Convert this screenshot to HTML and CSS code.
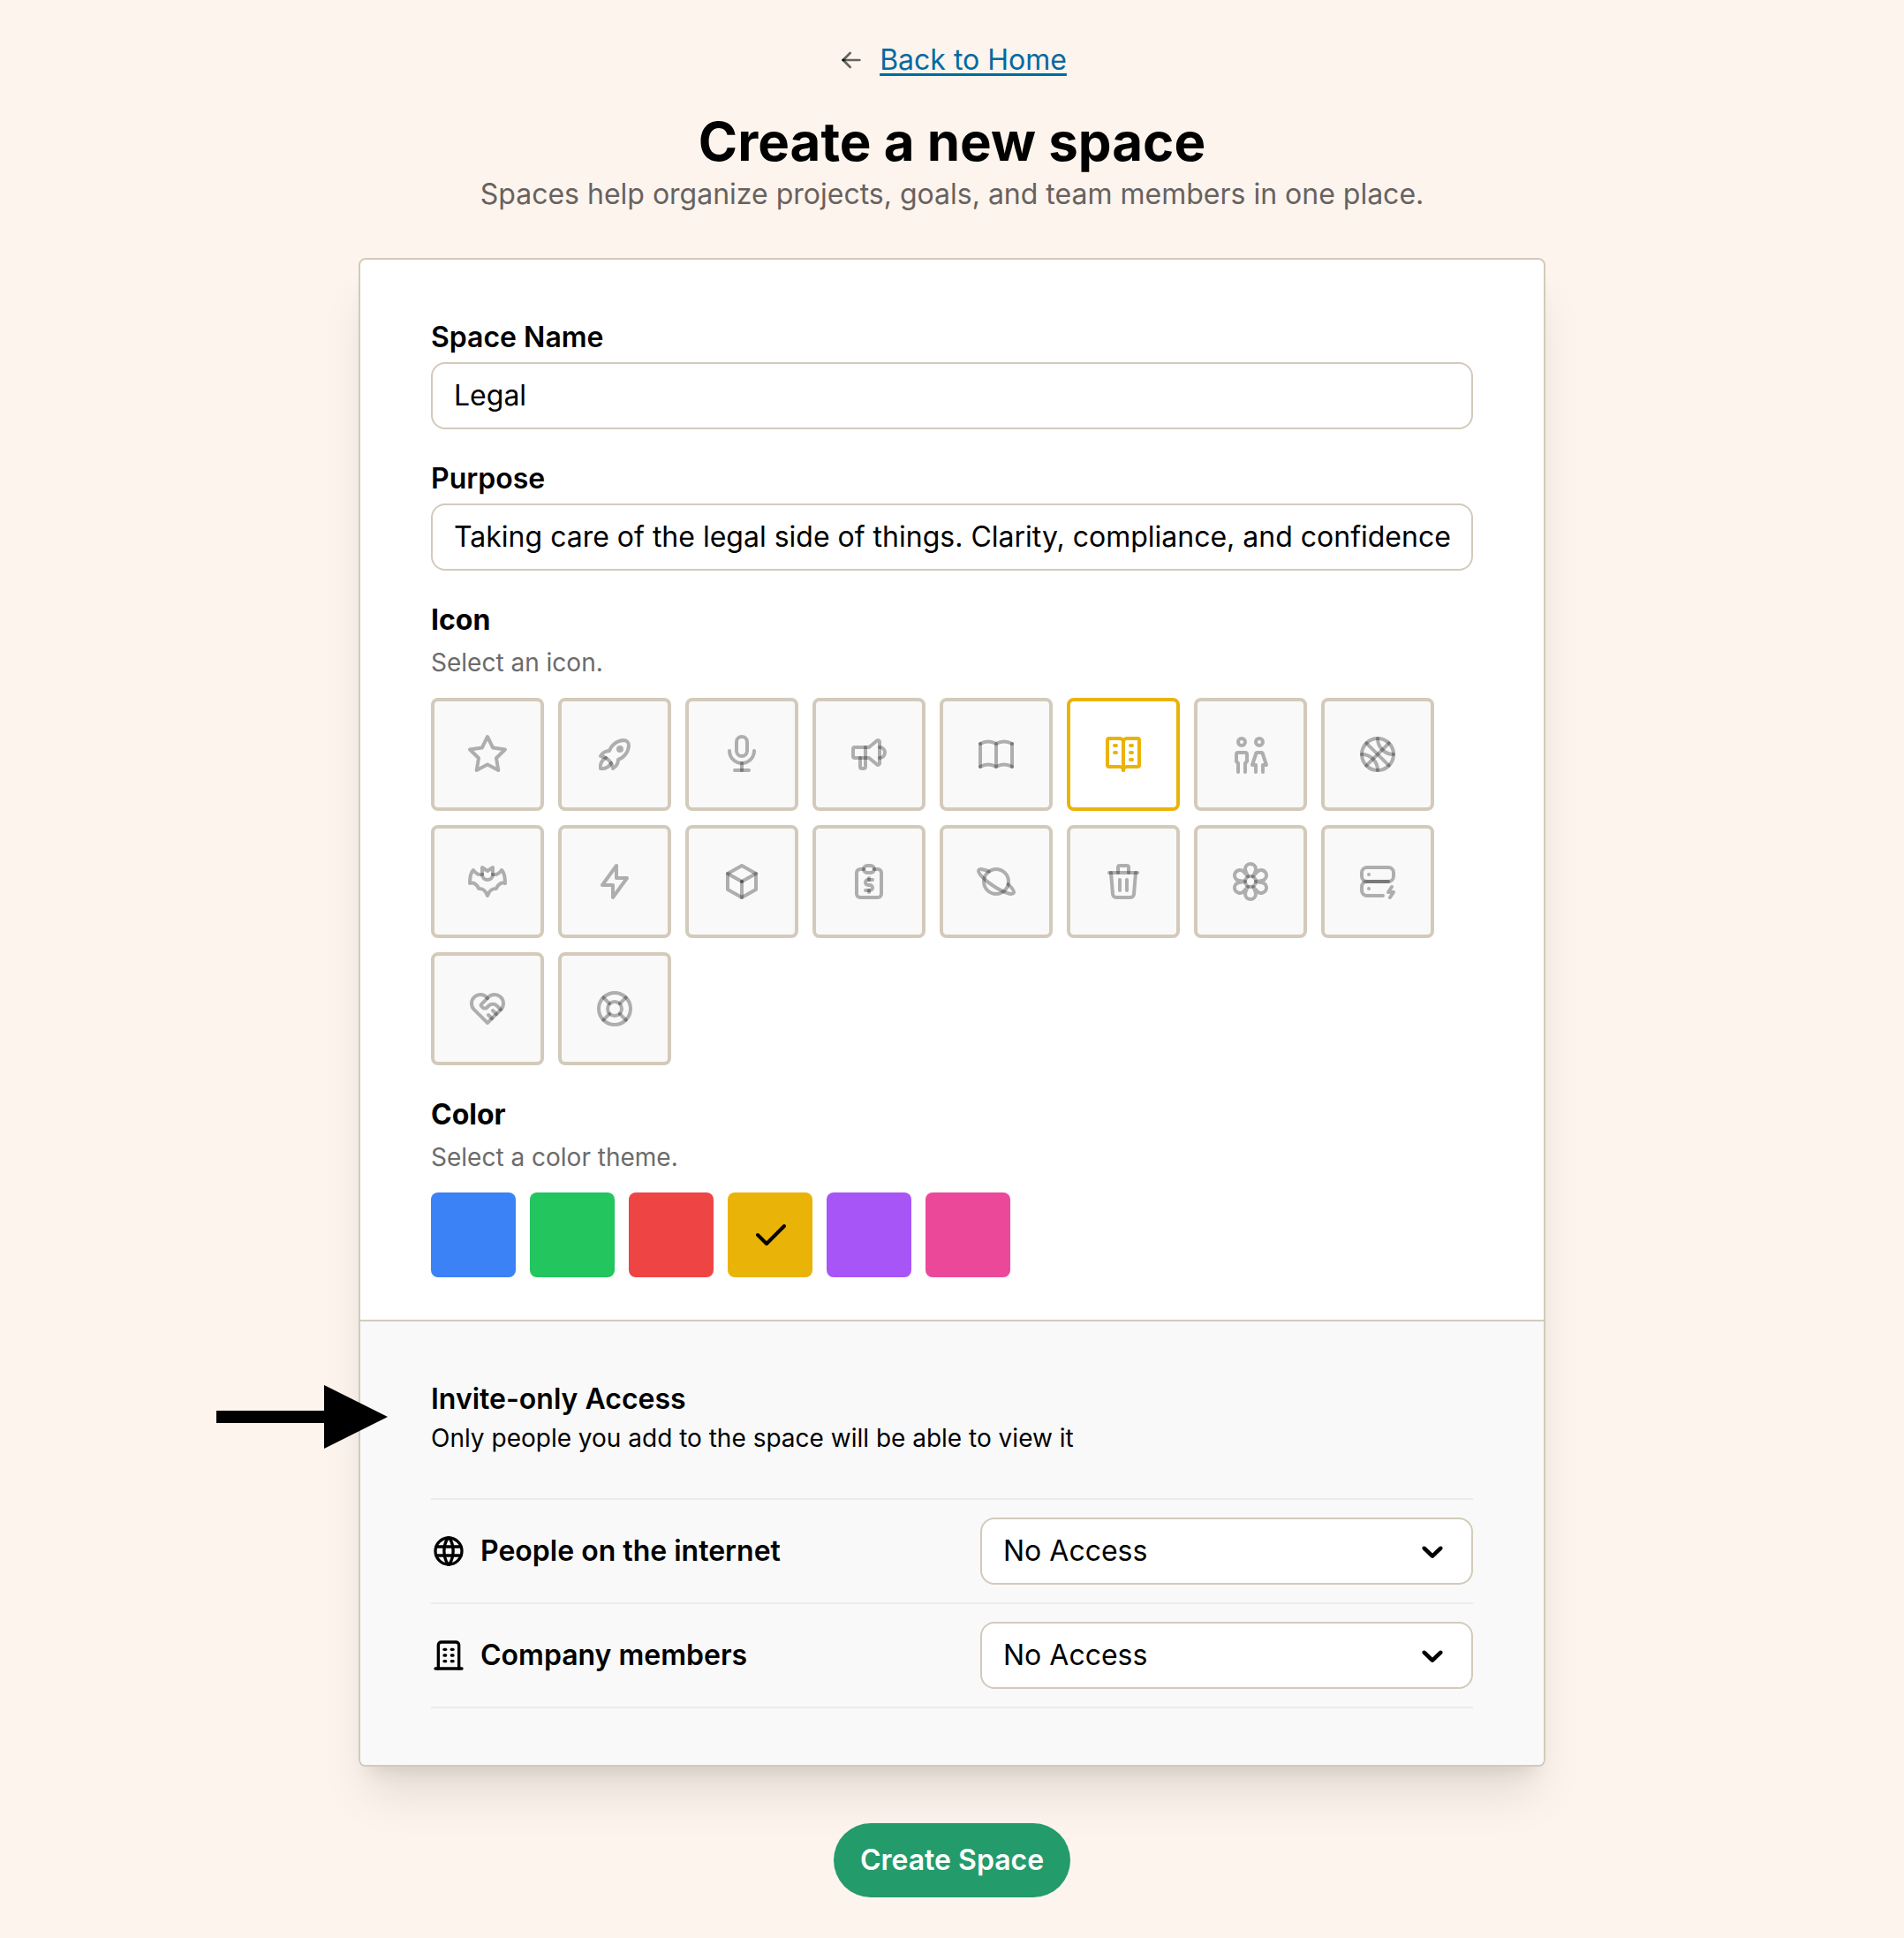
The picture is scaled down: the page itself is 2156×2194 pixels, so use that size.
FILE: index.html
```html
<!DOCTYPE html>
<html lang="en">
<head>
<meta charset="utf-8">
<meta name="viewport" content="width=device-width, initial-scale=1">
<title>Create a new space</title>
<link rel="stylesheet" href="styles.css">
</head>
<body>
<main class="page">
  <nav class="back">
    <svg class="icon back-icon" viewBox="0 0 24 24" aria-hidden="true"><path d="M5 12l14 0"/><path d="M5 12l6 6"/><path d="M5 12l6 -6"/></svg>
    <a class="back-link" href="#">Back to Home</a>
  </nav>
  <header class="intro">
    <h1 class="title">Create a new space</h1>
    <p class="subtitle">Spaces help organize projects, goals, and team members in one place.</p>
  </header>

  <form class="form">
    <div class="card">
      <div class="details">
        <div class="field">
          <label class="label" for="name">Space Name</label>
          <input class="input" id="name" type="text" value="Legal">
        </div>
        <div class="field">
          <label class="label" for="purpose">Purpose</label>
          <input class="input" id="purpose" type="text" value="Taking care of the legal side of things. Clarity, compliance, and confidence">
        </div>

        <section class="field">
          <h2 class="label group-label" id="icon-label">Icon</h2>
          <p class="hint">Select an icon.</p>
          <div class="tiles" role="group" aria-labelledby="icon-label">
            <button type="button" class="tile" aria-label="Star"><svg class="icon" viewBox="0 0 24 24"><path d="M12 17.75l-6.172 3.245l1.179 -6.873l-5 -4.867l6.9 -1l3.086 -6.253l3.086 6.253l6.9 1l-5 4.867l1.179 6.873z"/></svg></button>
            <button type="button" class="tile" aria-label="Rocket"><svg class="icon" viewBox="0 0 24 24"><path d="M4 13a8 8 0 0 1 7 7a6 6 0 0 0 3 -5a9 9 0 0 0 6 -8a3 3 0 0 0 -3 -3a9 9 0 0 0 -8 6a6 6 0 0 0 -5 3"/><path d="M7 14a6 6 0 0 0 -3 6a6 6 0 0 0 6 -3"/><circle cx="15" cy="9" r="1"/></svg></button>
            <button type="button" class="tile" aria-label="Microphone"><svg class="icon" viewBox="0 0 24 24"><rect x="9" y="2" width="6" height="11" rx="3"/><path d="M5 10a7 7 0 0 0 14 0"/><path d="M8 21l8 0"/><path d="M12 17l0 4"/></svg></button>
            <button type="button" class="tile" aria-label="Speakerphone"><svg class="icon" viewBox="0 0 24 24"><path d="M18 8a3 3 0 0 1 0 6"/><path d="M10 8v11a1 1 0 0 1 -1 1h-1a1 1 0 0 1 -1 -1v-5"/><path d="M12 8h0l4.524 -3.77a.9 .9 0 0 1 1.476 .692v12.156a.9 .9 0 0 1 -1.476 .692l-4.524 -3.77h-8a1 1 0 0 1 -1 -1v-4a1 1 0 0 1 1 -1h8"/></svg></button>
            <button type="button" class="tile" aria-label="Book"><svg class="icon" viewBox="0 0 24 24"><path d="M3 19a9 9 0 0 1 9 0a9 9 0 0 1 9 0"/><path d="M3 6a9 9 0 0 1 9 0a9 9 0 0 1 9 0"/><path d="M3 6l0 13"/><path d="M12 6l0 13"/><path d="M21 6l0 13"/></svg></button>
            <button type="button" class="tile tile-selected" aria-label="Vocabulary" aria-pressed="true"><svg class="icon" viewBox="0 0 24 24"><path d="M10 19h-6a1 1 0 0 1 -1 -1v-14a1 1 0 0 1 1 -1h6a2 2 0 0 1 2 2a2 2 0 0 1 2 -2h6a1 1 0 0 1 1 1v14a1 1 0 0 1 -1 1h-6a2 2 0 0 0 -2 2a2 2 0 0 0 -2 -2z"/><path d="M12 5v16"/><path d="M7 7h1"/><path d="M7 11h1"/><path d="M16 7h1"/><path d="M16 11h1"/><path d="M16 15h1"/></svg></button>
            <button type="button" class="tile" aria-label="Friends"><svg class="icon" viewBox="0 0 24 24"><circle cx="7" cy="5" r="2"/><path d="M5 22v-5l-1 -1v-4a1 1 0 0 1 1 -1h4a1 1 0 0 1 1 1v4l-1 1v5"/><circle cx="17" cy="5" r="2"/><path d="M15 22v-4h-2l2 -6a1 1 0 0 1 1 -1h2a1 1 0 0 1 1 1l2 6h-2v4"/></svg></button>
            <button type="button" class="tile" aria-label="Basketball"><svg class="icon" viewBox="0 0 24 24"><circle cx="12" cy="12" r="9"/><path d="M5.65 5.65l12.7 12.7"/><path d="M5.65 18.35l12.7 -12.7"/><path d="M12 3a9 9 0 0 0 9 9"/><path d="M3 12a9 9 0 0 1 9 9"/></svg></button>
            <button type="button" class="tile" aria-label="Bat"><svg class="icon" viewBox="0 0 24 24"><path d="M17 16c.74 -2.286 2.778 -3.762 5 -3c-.173 -2.595 .13 -5.314 -2 -7.5c-1.708 2.648 -3.358 2.557 -5 2.5v-4l-3 2l-3 -2v4c-1.642 .057 -3.292 .148 -5 -2.5c-2.13 2.186 -1.827 4.905 -2 7.5c2.222 -.762 4.26 .714 5 3c2.593 0 3.889 .952 5 4c1.111 -3.048 2.407 -4 5 -4z"/><path d="M9 8a3 3 0 0 0 6 0"/></svg></button>
            <button type="button" class="tile" aria-label="Bolt"><svg class="icon" viewBox="0 0 24 24"><path d="M13 3l0 7l6 0l-8 11l0 -7l-6 0l8 -11"/></svg></button>
            <button type="button" class="tile" aria-label="Box"><svg class="icon" viewBox="0 0 24 24"><path d="M12 3l8 4.5l0 9l-8 4.5l-8 -4.5l0 -9l8 -4.5"/><path d="M12 12l8 -4.5"/><path d="M12 12l0 9"/><path d="M12 12l-8 -4.5"/></svg></button>
            <button type="button" class="tile" aria-label="Report"><svg class="icon" viewBox="0 0 24 24"><path d="M9 5h-2a2 2 0 0 0 -2 2v12a2 2 0 0 0 2 2h10a2 2 0 0 0 2 -2v-12a2 2 0 0 0 -2 -2h-2"/><rect x="9" y="3" width="6" height="4" rx="2"/><path d="M14 11h-2.5a1.5 1.5 0 0 0 0 3h1a1.5 1.5 0 0 1 0 3h-2.5"/><path d="M12 17v1m0 -8v1"/></svg></button>
            <button type="button" class="tile" aria-label="Planet"><svg class="icon" viewBox="0 0 24 24"><path d="M18.816 13.58c2.292 2.138 3.546 4 3.092 4.9c-.745 1.46 -5.783 -.259 -11.255 -3.838c-5.47 -3.579 -9.304 -7.664 -8.56 -9.123c.464 -.91 2.926 -.444 5.803 .805"/><circle cx="12" cy="12" r="7"/></svg></button>
            <button type="button" class="tile" aria-label="Trash"><svg class="icon" viewBox="0 0 24 24"><path d="M4 7l16 0"/><path d="M10 11l0 6"/><path d="M14 11l0 6"/><path d="M5 7l1 12a2 2 0 0 0 2 2h8a2 2 0 0 0 2 -2l1 -12"/><path d="M9 7v-3a1 1 0 0 1 1 -1h4a1 1 0 0 1 1 1v3"/></svg></button>
            <button type="button" class="tile" aria-label="Flower"><svg class="icon" viewBox="0 0 24 24"><circle cx="12" cy="12" r="3"/><path d="M12 2a3 3 0 0 1 3 3c0 .562 -.259 1.442 -.776 2.64l-.724 1.36l1.76 -1.893c.499 -.6 .922 -1 1.27 -1.205a2.968 2.968 0 0 1 4.07 1.099a3.011 3.011 0 0 1 -1.09 4.098c-.374 .217 -.99 .396 -1.846 .535l-2.664 .366l2.4 .326c1 .145 1.698 .337 2.11 .576a3.011 3.011 0 0 1 1.09 4.098a2.968 2.968 0 0 1 -4.07 1.098c-.348 -.202 -.771 -.604 -1.27 -1.205l-1.76 -1.893l.724 1.36c.516 1.199 .776 2.079 .776 2.64a3 3 0 0 1 -6 0c0 -.562 .259 -1.442 .776 -2.64l.724 -1.36l-1.76 1.893c-.499 .601 -.922 1 -1.27 1.205a2.968 2.968 0 0 1 -4.07 -1.098a3.011 3.011 0 0 1 1.09 -4.098c.374 -.218 .99 -.396 1.846 -.536l2.664 -.366l-2.4 -.325c-1 -.145 -1.698 -.337 -2.11 -.576a3.011 3.011 0 0 1 -1.09 -4.099a2.968 2.968 0 0 1 4.07 -1.099c.348 .203 .771 .604 1.27 1.205l1.76 1.894c-1 -2.292 -1.5 -3.625 -1.5 -4a3 3 0 0 1 3 -3z"/></svg></button>
            <button type="button" class="tile" aria-label="Server"><svg class="icon" viewBox="0 0 24 24"><rect x="3" y="4" width="18" height="8" rx="3"/><path d="M15 20h-9a3 3 0 0 1 -3 -3v-2a3 3 0 0 1 3 -3h12"/><path d="M7 8v.01"/><path d="M7 16v.01"/><path d="M20 15l-2 3h3l-2 3"/></svg></button>
            <button type="button" class="tile" aria-label="Handshake"><svg class="icon" viewBox="0 0 24 24"><path d="M19.5 12.572l-7.5 7.428l-7.5 -7.428a5 5 0 1 1 7.5 -6.566a5 5 0 1 1 7.5 6.572"/><path d="M12 6l-3.293 3.293a1 1 0 0 0 0 1.414l.543 .543c.69 .69 1.81 .69 2.5 0l1 -1a3.182 3.182 0 0 1 4.5 0l2.25 2.25"/><path d="M12.5 15.5l2 2"/><path d="M15 13l2 2"/></svg></button>
            <button type="button" class="tile" aria-label="Lifebuoy"><svg class="icon" viewBox="0 0 24 24"><circle cx="12" cy="12" r="4"/><circle cx="12" cy="12" r="9"/><path d="M15 15l3.35 3.35"/><path d="M9 15l-3.35 3.35"/><path d="M5.65 5.65l3.35 3.35"/><path d="M18.35 5.65l-3.35 3.35"/></svg></button>
          </div>
        </section>

        <section class="field">
          <h2 class="label group-label" id="color-label">Color</h2>
          <p class="hint">Select a color theme.</p>
          <div class="swatches" role="group" aria-labelledby="color-label">
            <button type="button" class="swatch blue" aria-label="Blue"></button>
            <button type="button" class="swatch green" aria-label="Green"></button>
            <button type="button" class="swatch red" aria-label="Red"></button>
            <button type="button" class="swatch yellow" aria-label="Yellow" aria-pressed="true"><svg class="icon" viewBox="0 0 24 24"><path d="M5 12l5 5l10 -10"/></svg></button>
            <button type="button" class="swatch purple" aria-label="Purple"></button>
            <button type="button" class="swatch pink" aria-label="Pink"></button>
          </div>
        </section>
      </div>

      <section class="access">
        <svg class="pointer" viewBox="0 0 194 72" aria-hidden="true"><path d="M0 29H122V0L194 36L122 72V43H0z"/></svg>
        <h2 class="access-title">Invite-only Access</h2>
        <p class="access-text">Only people you add to the space will be able to view it</p>
        <div class="rules">
          <div class="rule">
            <label class="rule-label" for="internet"><svg class="icon rule-icon" viewBox="0 0 24 24" aria-hidden="true"><circle cx="12" cy="12" r="9"/><path d="M3.6 9h16.8"/><path d="M3.6 15h16.8"/><path d="M11.5 3a17 17 0 0 0 0 18"/><path d="M12.5 3a17 17 0 0 1 0 18"/></svg>People on the internet</label>
            <div class="select-box">
              <select class="select" id="internet"><option>No Access</option></select>
              <svg class="chevron" viewBox="0 0 20 20" aria-hidden="true"><path d="M4.516 7.548c.436-.446 1.043-.481 1.576 0l3.908 3.747 3.908-3.747c.533-.481 1.141-.446 1.574 0 .436.445.408 1.197 0 1.615-.406.418-4.695 4.502-4.695 4.502-.217.223-.502.335-.787.335s-.57-.112-.789-.335c0 0-4.287-4.084-4.695-4.502s-.436-1.17 0-1.615z"/></svg>
            </div>
          </div>
          <div class="rule">
            <label class="rule-label" for="company"><svg class="icon rule-icon" viewBox="0 0 24 24" aria-hidden="true"><path d="M3 21l18 0"/><path d="M9 8l1 0"/><path d="M9 12l1 0"/><path d="M9 16l1 0"/><path d="M14 8l1 0"/><path d="M14 12l1 0"/><path d="M14 16l1 0"/><path d="M5 21v-16a2 2 0 0 1 2 -2h10a2 2 0 0 1 2 2v16"/></svg>Company members</label>
            <div class="select-box">
              <select class="select" id="company"><option>No Access</option></select>
              <svg class="chevron" viewBox="0 0 20 20" aria-hidden="true"><path d="M4.516 7.548c.436-.446 1.043-.481 1.576 0l3.908 3.747 3.908-3.747c.533-.481 1.141-.446 1.574 0 .436.445.408 1.197 0 1.615-.406.418-4.695 4.502-4.695 4.502-.217.223-.502.335-.787.335s-.57-.112-.789-.335c0 0-4.287-4.084-4.695-4.502s-.436-1.17 0-1.615z"/></svg>
            </div>
          </div>
        </div>
      </section>
    </div>
    <button type="submit" class="submit">Create Space</button>
  </form>
</main>
</body>
</html>
```
FILE: styles.css
```css
*,
*::before,
*::after {
  box-sizing: border-box;
}

body {
  margin: 0;
  background: #fdf4ed;
  color: #000;
  font: 400 32px/48px Inter, "Liberation Sans", sans-serif;
}

h1,
h2,
p {
  margin: 0;
}

button,
input,
select {
  margin: 0;
  font: inherit;
  color: inherit;
}

.icon {
  width: 48px;
  height: 48px;
  fill: none;
  stroke: currentColor;
  stroke-width: 2;
  stroke-linecap: round;
  stroke-linejoin: round;
}

.page {
  padding: 44px 24px 46px;
}

.back {
  display: flex;
  justify-content: center;
  align-items: center;
  gap: 16px;
}

.back-icon {
  width: 32px;
  height: 32px;
  color: rgba(0, 0, 0, 0.6);
}

.back-link {
  color: #0369a1;
  text-decoration: underline 3px;
  text-underline-offset: 4px;
}

.intro {
  margin-top: 32px;
  text-align: center;
}

.title {
  font-size: 60px;
  line-height: 72px;
  font-weight: 700;
}

.subtitle {
  color: #676260;
}

.form {
  display: flex;
  flex-direction: column;
  align-items: center;
  gap: 64px;
  margin-top: 48px;
}

.card {
  width: 100%;
  max-width: 1344px;
  border: 2px solid #d3cabb;
  border-radius: 8px;
  background: #fff;
  box-shadow: 0 40px 50px -10px rgba(0, 0, 0, 0.1), 0 16px 20px -12px rgba(0, 0, 0, 0.1);
}

.details {
  display: flex;
  flex-direction: column;
  gap: 32px;
  padding: 64px 80px 48px;
}

.label {
  display: block;
  margin-bottom: 4px;
  font-size: 32px;
  font-weight: 600;
}

.group-label {
  font-weight: 700;
}

.input,
.select {
  display: block;
  width: 100%;
  height: 76px;
  padding: 0 24px;
  border: 2px solid #d3cabb;
  border-radius: 16px;
  background: #fff;
}

.input {
  padding-bottom: 2px;
}

.hint {
  margin-bottom: 20px;
  color: #6b6b6b;
  font-size: 28px;
  line-height: 40px;
}

.tiles,
.swatches {
  display: flex;
  flex-wrap: wrap;
  gap: 16px;
}

.tile,
.swatch {
  display: flex;
  align-items: center;
  justify-content: center;
  padding: 0;
  border-radius: 8px;
}

.tile {
  width: 128px;
  height: 128px;
  border: 4px solid #d3cabb;
  background: #f9f9f9;
  color: rgba(0, 0, 0, 0.3);
}

.tile-selected {
  border-color: #eab308;
  background: #fff;
  color: #eab308;
}

.swatch {
  width: 96px;
  height: 96px;
  border: 0;
}

.blue { background: #3b82f6; }
.green { background: #22c55e; }
.red { background: #ef4444; }
.yellow { background: #eab308; }
.purple { background: #a855f7; }
.pink { background: #ec4899; }

.access {
  position: relative;
  padding: 64px 80px;
  border-top: 2px solid #d3cabb;
  border-radius: 0 0 6px 6px;
  background: #f9f9f9;
}

/* Callout arrow laid over the card's left edge */
.pointer {
  position: absolute;
  top: 72px;
  left: -163px;
  width: 194px;
  height: 72px;
}

.access-title {
  font-size: 32px;
  font-weight: 600;
}

.access-text {
  font-size: 28px;
  line-height: 40px;
}

.rules {
  margin-top: 48px;
  border-top: 2px solid #ececec;
}

.rule {
  display: grid;
  grid-template-columns: 1fr 1fr;
  align-items: center;
  gap: 64px;
  padding: 20px 0;
  border-bottom: 2px solid #ececec;
}

.rule-label {
  display: flex;
  align-items: center;
  gap: 16px;
  font-weight: 600;
  white-space: nowrap;
}

.rule-icon {
  width: 40px;
  height: 40px;
}

.select-box {
  display: grid;
  align-items: center;
}

.select,
.chevron {
  grid-area: 1 / 1;
}

.select {
  appearance: none;
}

.chevron {
  justify-self: end;
  width: 40px;
  height: 40px;
  margin-right: 26px;
  pointer-events: none;
}

.submit {
  height: 84px;
  padding: 0 30px;
  border: 0;
  border-radius: 42px;
  background: #239b6a;
  color: #fff;
  font-weight: 600;
}
```
